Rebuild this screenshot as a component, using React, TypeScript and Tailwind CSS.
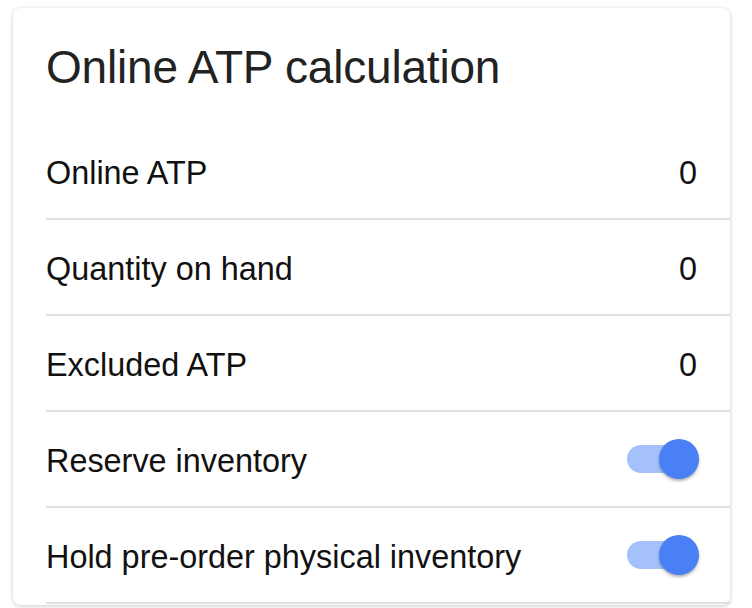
import React from "react";

const Toggle = () => (
  <div className="relative h-[40px] w-[72px] shrink-0">
    <div className="absolute left-0 top-[6px] h-[28px] w-[68px] rounded-full bg-[#a4c1fa]" />
    <div className="absolute left-[32px] top-0 h-[40px] w-[40px] rounded-full bg-[#4a80f5] shadow-[0_2px_3px_rgba(0,0,0,0.3)]" />
  </div>
);

const rows: { label: string; value?: string; toggle?: boolean }[] = [
  { label: "Online ATP", value: "0" },
  { label: "Quantity on hand", value: "0" },
  { label: "Excluded ATP", value: "0" },
  { label: "Reserve inventory", toggle: true },
  { label: "Hold pre-order physical inventory", toggle: true },
];

export default function App() {
  return (
    <div
      className="min-h-[608px] w-[752px] bg-white pl-[13px] pt-[8px]"
      style={{ fontFamily: '"Liberation Sans", Arial, sans-serif' }}
    >
      <div className="w-[717px] rounded-[8px] bg-white pb-[1px] shadow-[0_1px_4px_rgba(0,0,0,0.22)]">
        <div className="pl-[33px] pt-[32px] pb-[30px] text-[46px] leading-[54px] text-[#222] tracking-[-0.2px]">
          Online ATP calculation
        </div>
        {rows.map((r) => (
          <div
            key={r.label}
            className="ml-[33px] flex h-[96px] items-center justify-between border-b-[2px] border-[#e0e0e0] pr-[31px] text-[32.4px] text-[#111]"
          >
            <span className="pt-[4px]">{r.label}</span>
            {r.toggle ? <Toggle /> : <span className="pr-[2px] pt-[4px]">{r.value}</span>}
          </div>
        ))}
      </div>
    </div>
  );
}
